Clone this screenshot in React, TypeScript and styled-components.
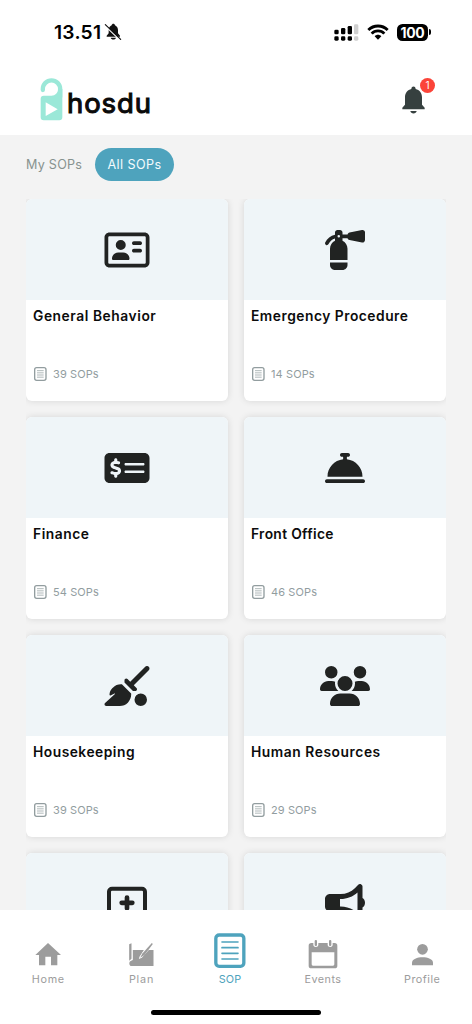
import React from "react";
import styled, { createGlobalStyle } from "styled-components";
import {
  FaRegAddressCard,
  FaFireExtinguisher,
  FaMoneyCheckDollar,
  FaBellConcierge,
  FaBroomBall,
  FaUsers,
  FaBullhorn,
} from "react-icons/fa6";

const GlobalStyle = createGlobalStyle`
  * { box-sizing: border-box; }
  body { margin: 0; background: #fff; font-family: Inter, "Liberation Sans", sans-serif; }
`;

const Screen = styled.div`
  width: 472px;
  height: 1024px;
  display: flex;
  flex-direction: column;
  overflow: hidden;
  background: #f3f3f3;
`;

const StatusBar = styled.div`
  height: 64px;
  flex: none;
  display: flex;
  align-items: center;
  justify-content: space-between;
  padding: 0 41px 0 54px;
  background: #fff;
`;

const StatusGroup = styled.div<{ $gap: number }>`
  display: flex;
  align-items: center;
  gap: ${(p) => p.$gap}px;
`;

const Time = styled.span`
  font-size: 19.2px;
  font-weight: 600;
  letter-spacing: 0.25px;
  line-height: 24px;
`;

const Battery = styled.div`
  display: flex;
  align-items: center;
  gap: 1px;
`;

const BatteryBody = styled.div`
  width: 31px;
  height: 17px;
  border-radius: 5.5px;
  background: #000;
  color: #fff;
  font-size: 14px;
  font-weight: 700;
  line-height: 17px;
  text-align: center;
  letter-spacing: -0.3px;
`;

const BatteryTip = styled.div`
  width: 2px;
  height: 6px;
  border-radius: 0 2px 2px 0;
  background: #000;
`;

const Header = styled.header`
  height: 71px;
  flex: none;
  display: flex;
  align-items: flex-start;
  justify-content: space-between;
  padding: 14px 37px 0 40px;
  background: #fff;
`;

const Logo = styled.div`
  display: flex;
  align-items: flex-start;
  gap: 4px;
`;

const LogoText = styled.span`
  font-size: 27.5px;
  font-weight: 400;
  line-height: 34px;
  padding-top: 8px;
  letter-spacing: 0.9px;
  -webkit-text-stroke: 1.1px #0a0a0a;
  color: #0a0a0a;
`;

const Bell = styled.div`
  position: relative;
  width: 33px;
  height: 43px;
  padding-top: 8px;
`;

const Badge = styled.span`
  position: absolute;
  top: 0;
  right: 0;
  width: 15px;
  height: 15px;
  border-radius: 50%;
  background: #fb4439;
  color: #fff;
  font-size: 10px;
  line-height: 15px;
  text-align: center;
`;

const Tabs = styled.nav`
  height: 64px;
  flex: none;
  display: flex;
  align-items: flex-start;
  padding: 13px 26px 0;
  gap: 13px;
`;

const Tab = styled.span<{ $active?: boolean }>`
  height: 33px;
  line-height: 33px;
  border-radius: 17px;
  font-size: 12.6px;
  letter-spacing: ${(p) => (p.$active ? "0.4px" : "0.25px")};
  white-space: nowrap;
  width: ${(p) => (p.$active ? "79px" : "56px")};
  text-align: ${(p) => (p.$active ? "center" : "left")};
  background: ${(p) => (p.$active ? "#4ea3bd" : "transparent")};
  color: ${(p) => (p.$active ? "#f4fbfd" : "#87928f")};
`;

const Grid = styled.main`
  flex: 1;
  min-height: 0;
  margin: 0 26px;
  overflow: hidden;
  display: grid;
  grid-template-columns: 202px 202px;
  grid-auto-rows: 201.5px;
  gap: 16.5px 16px;
`;

const Card = styled.article`
  border-radius: 6px;
  overflow: hidden;
  background: #fff;
  box-shadow: 0 0 7px rgba(0, 0, 0, 0.12);
  display: flex;
  flex-direction: column;
`;

const CardArt = styled.div`
  height: 101px;
  flex: none;
  display: flex;
  align-items: center;
  justify-content: center;
  background: #eff5f8;
  color: #212322;
  svg {
    width: 50px;
    height: 40px;
  }
`;

const CardBody = styled.div`
  flex: 1;
  display: flex;
  flex-direction: column;
  justify-content: space-between;
  padding: 5.5px 7px 19px;
`;

const CardTitle = styled.h2<{ $spacing?: number }>`
  margin: 0;
  font-size: 13.8px;
  line-height: 20px;
  font-weight: 600;
  white-space: nowrap;
  letter-spacing: ${(p) => p.$spacing ?? 0.5}px;
  color: #0c0c0c;
`;

const Count = styled.div`
  display: flex;
  align-items: center;
  gap: 6px;
  padding-left: 1px;
  font-size: 11px;
  line-height: 16px;
  letter-spacing: 0.1px;
  color: #929d9f;
`;

const BottomNav = styled.nav`
  height: 114px;
  flex: none;
  display: flex;
  flex-direction: column;
  align-items: center;
  background: #fff;
`;

const NavItems = styled.div`
  height: 100px;
  width: 100%;
  display: grid;
  grid-template-columns: 96.6px 89.8px 87.2px 98.8px 99.6px;
`;

const NavItem = styled.div<{ $active?: boolean }>`
  display: flex;
  flex-direction: column;
  align-items: center;
  padding-top: 22px;
  gap: 2px;
  color: ${(p) => (p.$active ? "#4ea3bd" : "#9c9c9c")};
`;

const NavLabel = styled.span<{ $spacing?: number }>`
  font-size: 10.8px;
  line-height: 16px;
  letter-spacing: ${(p) => p.$spacing ?? 0.5}px;
`;

const HomeBar = styled.div`
  width: 170px;
  height: 5px;
  border-radius: 3px;
  background: #000;
`;

const MutedBell = () => (
  <svg width="18" height="18" viewBox="0 0 54 54">
    <path
      d="M8 41v-3l6-7V22C14 14 18 9 23 7c1-6 9-6 10 0 6 3 9 8 9 15v9l6 7v3zM20 44h16c-1 7-15 7-16 0z"
      fill="#111"
    />
    <path d="M4 9 50 53" stroke="#fff" strokeWidth="4" />
    <path d="M4 5 50 49" stroke="#111" strokeWidth="3.5" strokeLinecap="round" />
  </svg>
);

const Signal = () => (
  <svg width="25" height="18" viewBox="0 0 75 54">
    <g fill="#000">
      <rect x="1" y="20" width="13" height="14" rx="4" />
      <rect x="21" y="15" width="13" height="19" rx="4" />
      <rect x="41" y="9" width="13" height="25" rx="4" />
      <rect x="1" y="40" width="13" height="13" rx="4" />
      <rect x="21" y="40" width="13" height="13" rx="4" />
      <rect x="41" y="40" width="13" height="13" rx="4" />
    </g>
    <g fill="#cfcfcf">
      <rect x="60" y="4" width="13" height="30" rx="4" />
      <rect x="60" y="40" width="13" height="13" rx="4" />
    </g>
  </svg>
);

const Wifi = () => (
  <svg width="22" height="16" viewBox="0 0 66 48" fill="none" stroke="#000" strokeWidth="8.5">
    <path d="M4 18C20 2 46 2 62 18" />
    <path d="M14 29C24 18 42 18 52 29" />
    <path d="M33 47 23 37c5-6 15-6 20 0z" fill="#000" stroke="none" />
  </svg>
);

const LogoMark = () => (
  <svg width="23" height="43" viewBox="0 0 69 129">
    <path
      d="M8.500 36V33a26 26 0 0 1 52 0v24"
      fill="none"
      stroke="#9be8d8"
      strokeWidth="13"
      strokeLinecap="round"
    />
    <path
      d="M2 62q0-9 9-9h23c12 0 20-8 20-20h13v85q0 9-9 9H11q-9 0-9-9z"
      fill="#9be8d8"
    />
    <path d="M17 73v41l36-20z" fill="#fff" />
  </svg>
);

const BellIcon = () => (
  <svg width="23" height="28" viewBox="0 0 69 84" fill="#36403f">
    <path d="M1 70v-5l8-9V34C9 20 17 12 28 9c0-10 13-10 13 0 11 3 19 11 19 25v22l8 9v5zM25 75h19c-1 10-18 10-19 0z" />
  </svg>
);

const ListIcon = () => (
  <svg width="13" height="14" viewBox="0 0 39 42" fill="none" stroke="#929d9f">
    <rect x="2" y="2" width="34" height="38" rx="6" strokeWidth="4" />
    <path d="M9 11h20M9 17.500h20M9 24h20M9 30.500h20" strokeWidth="2.2" />
  </svg>
);

const MedicalKit = () => (
  <svg viewBox="306 131.500 150 120">
    <rect x="327" y="146" width="108" height="94" rx="9" fill="none" stroke="currentColor" strokeWidth="12" />
    <path
      d="M381 172v32M365 188h32"
      stroke="currentColor"
      strokeWidth="14"
      strokeLinecap="round"
    />
  </svg>
);

const HomeIcon = () => (
  <svg width="38" height="38" viewBox="88 276 114 114" fill="currentColor">
    <path d="M145 309 184 345h-11v31h-19v-26h-17v26h-19v-31h-11z" />
  </svg>
);

const PlanIcon = () => (
  <svg width="38" height="38" viewBox="367.500 276 114 114" fill="currentColor">
    <path d="M389 313l7-3v46l-7 6z" />
    <path d="M400 330h33l-13 20-2 7 9-4 21-23h14v48h-66c-8 0-9-14-1-16l5-2z" />
    <path d="M457 309l3 3-25 33-13 8 6-12z" />
  </svg>
);

const SopIcon = () => (
  <svg width="38" height="38" viewBox="633 276 114 114" fill="none" stroke="currentColor">
    <rect x="647.500" y="285" width="84" height="94" rx="10" strokeWidth="10" />
    <path
      d="M666 306h48M666 323h48M666 340h48M666 357h48"
      strokeWidth="5"
      strokeLinecap="round"
    />
  </svg>
);

const EventsIcon = () => (
  <svg width="38" height="38" viewBox="216 276 114 114" fill="currentColor">
    <path
      fillRule="evenodd"
      d="M238 309h6v5c0 9 15 9 15 0v-5h28v5c0 9 15 9 15 0v-5h6q8 0 8 8v60q0 8-8 8h-70q-8 0-8-8v-60q0-8 8-8zM239 337v36q0 4 4 4h60q4 0 4-4v-36z"
    />
    <rect x="248" y="300" width="7" height="18" rx="3" />
    <rect x="291" y="300" width="7" height="18" rx="3" />
  </svg>
);

const ProfileIcon = () => (
  <svg width="38" height="38" viewBox="513 276 114 114" fill="currentColor">
    <circle cx="571.500" cy="328" r="16" />
    <path d="M540 376v-8c0-22 63-22 63 0v8z" />
  </svg>
);

const departments = [
  { title: "General Behavior", count: 39, icon: <FaRegAddressCard />, spacing: 0.56 },
  { title: "Emergency Procedure", count: 14, icon: <FaFireExtinguisher />, spacing: 0.51 },
  { title: "Finance", count: 54, icon: <FaMoneyCheckDollar />, spacing: 0.53 },
  { title: "Front Office", count: 46, icon: <FaBellConcierge />, spacing: 0.33 },
  { title: "Housekeeping", count: 39, icon: <FaBroomBall />, spacing: 0.5 },
  { title: "Human Resources", count: 29, icon: <FaUsers />, spacing: 0.56 },
  { icon: <MedicalKit /> },
  { icon: <FaBullhorn /> },
];

const navItems = [
  { label: "Home", icon: <HomeIcon />, spacing: 0.75 },
  { label: "Plan", icon: <PlanIcon />, spacing: 0.8 },
  { label: "SOP", icon: <SopIcon />, active: true, spacing: 0.1 },
  { label: "Events", icon: <EventsIcon /> },
  { label: "Profile", icon: <ProfileIcon /> },
];

export default function App() {
  return (
    <>
      <GlobalStyle />
      <Screen>
        <StatusBar>
          <StatusGroup $gap={3}>
            <Time>13.51</Time>
            <MutedBell />
          </StatusGroup>
          <StatusGroup $gap={8}>
            <Signal />
            <Wifi />
            <Battery>
              <BatteryBody>100</BatteryBody>
              <BatteryTip />
            </Battery>
          </StatusGroup>
        </StatusBar>
        <Header>
          <Logo>
            <LogoMark />
            <LogoText>hosdu</LogoText>
          </Logo>
          <Bell>
            <BellIcon />
            <Badge>1</Badge>
          </Bell>
        </Header>
        <Tabs>
          <Tab>My SOPs</Tab>
          <Tab $active>All SOPs</Tab>
        </Tabs>
        <Grid>
          {departments.map((d, i) => (
            <Card key={i}>
              <CardArt>{d.icon}</CardArt>
              {d.title && (
                <CardBody>
                  <CardTitle $spacing={d.spacing}>{d.title}</CardTitle>
                  <Count>
                    <ListIcon />
                    <span>{d.count} SOPs</span>
                  </Count>
                </CardBody>
              )}
            </Card>
          ))}
        </Grid>
        <BottomNav>
          <NavItems>
            {navItems.map((n) => (
              <NavItem key={n.label} $active={n.active}>
                {n.icon}
                <NavLabel $spacing={n.spacing}>{n.label}</NavLabel>
              </NavItem>
            ))}
          </NavItems>
          <HomeBar />
        </BottomNav>
      </Screen>
    </>
  );
}
